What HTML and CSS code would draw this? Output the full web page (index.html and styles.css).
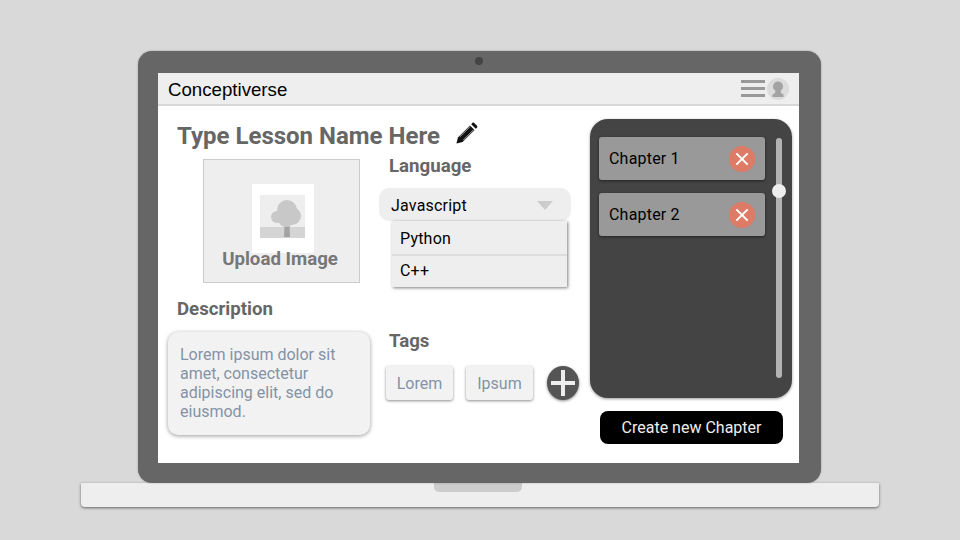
FILE: index.html
```html
<!DOCTYPE html>
<html lang="en">
<head>
    <meta charset="UTF-8">
    <title>Conceptiverse</title>
    <link rel="stylesheet" href="styles.css">
</head>
<body>
    <div class="laptop">
        <div class="lid">
            <div class="camera"></div>
            <div class="screen">
                <div class="topbar">
                    <span class="brand">Conceptiverse</span>
                    <div class="topbar-right">
                        <div class="menu"><span></span><span></span><span></span></div>
                        <svg class="avatar" width="22" height="22" viewBox="0 0 22 22">
                            <circle cx="11" cy="11" r="11" fill="#dcdcdc"/>
                            <circle cx="11" cy="8.500" r="5" fill="#a3a3a3"/>
                            <path d="M8.500 12h5l.5 3 2.500 1.500v2.500h-11v-2.500l2.500-1.500z" fill="#a3a3a3"/>
                        </svg>
                    </div>
                </div>
                <div class="main">
                    <div class="editor">
                        <div class="title-row">
                            <h1>Type Lesson Name Here</h1>
                            <svg class="pencil" width="23" height="23" viewBox="0 0 24 24">
                                <path d="M1.500 22.500l1.600-6.400L15.600 3.600l4.800 4.800L7.900 20.900z" fill="#111"/>
                                <path d="M16.900 2.300l1.200-1.200c.6-.6 1.400-.6 2 0l2.800 2.800c.6.6.6 1.400 0 2l-1.200 1.200z" fill="#111"/>
                                <path d="M5 15.500L16 4.500M8.500 19L19.500 8" stroke="#fff" stroke-width=".7" fill="none"/>
                            </svg>
                        </div>
                        <div class="columns">
                            <div class="col-left">
                                <div class="upload">
                                    <div class="placeholder">
                                        <svg width="45" height="43" viewBox="0 0 45 43">
                                            <rect width="45" height="43" fill="#eeeeee"/>
                                            <rect y="32" width="45" height="11" fill="#d4d4d4"/>
                                            <path d="M30 42h-6l.5-12h5z" fill="#a3a3a3"/>
                                            <circle cx="27" cy="15" r="10" fill="#c8c8c8"/>
                                            <circle cx="32" cy="21" r="9" fill="#c8c8c8"/>
                                            <circle cx="26" cy="24" r="8" fill="#c8c8c8"/>
                                            <circle cx="17" cy="22" r="6" fill="#c8c8c8"/>
                                        </svg>
                                    </div>
                                    <span class="upload-label">Upload Image</span>
                                </div>
                                <h2 class="desc-heading">Description</h2>
                                <div class="desc-card">Lorem ipsum dolor sit amet, consectetur adipiscing elit, sed do eiusmod.</div>
                            </div>
                            <div class="col-right">
                                <h2 class="lang-heading">Language</h2>
                                <div class="select">
                                    <span>Javascript</span>
                                    <div class="arrow"></div>
                                </div>
                                <div class="dropdown">
                                    <div class="option">Python</div>
                                    <div class="option">C++</div>
                                </div>
                                <h2 class="tags-heading">Tags</h2>
                                <div class="tags">
                                    <div class="tag">Lorem</div>
                                    <div class="tag">Ipsum</div>
                                    <div class="add-tag"></div>
                                </div>
                            </div>
                        </div>
                    </div>
                    <div class="sidebar">
                        <div class="panel">
                            <div class="chapters">
                                <div class="chapter">
                                    <span>Chapter 1</span>
                                    <div class="remove"></div>
                                </div>
                                <div class="chapter">
                                    <span>Chapter 2</span>
                                    <div class="remove"></div>
                                </div>
                            </div>
                            <div class="track"><div class="knob"></div></div>
                        </div>
                        <button class="create">Create new Chapter</button>
                    </div>
                </div>
            </div>
        </div>
        <div class="base"><div class="notch"></div></div>
    </div>
</body>
</html>
```
FILE: styles.css
```css
* { box-sizing: border-box; }
body { margin: 0; width: 960px; height: 540px; overflow: hidden; background-color: #d9d9d9; font-family: Roboto, sans-serif; }
h1, h2 { margin: 0; font-weight: 700; color: #666; }

.laptop { display: flex; flex-direction: column; align-items: center; padding-top: 51px; }
.lid { position: relative; width: 683px; height: 432px; margin-right: 1px; padding: 22px 22px 20px 20px; background-color: #666; border-radius: 14px; box-shadow: 0 0 2px rgba(0,0,0,.3); }
.camera { position: absolute; top: 6px; left: 337px; width: 8px; height: 8px; border-radius: 50%; background-color: #444; }
.screen { height: 390px; background-color: #fff; }
.base { width: 798px; height: 24px; display: flex; justify-content: center; background-color: #eee; border-radius: 0 0 4px 4px; box-shadow: 0 1px 3px rgba(0,0,0,.55); }
.notch { width: 88px; height: 9px; margin-right: 5px; background-color: #ccc; border-radius: 0 0 5px 5px; }

.topbar { display: flex; align-items: center; justify-content: space-between; height: 33px; padding: 0 10px 0 10px; background-color: #eee; border-bottom: 2px solid #d8d8d8; }
.brand { padding-top: 2px; font-family: "Liberation Sans", sans-serif; font-size: 18.67px; line-height: 22px; color: #000; }
.topbar-right { display: flex; align-items: center; gap: 2px; }
.menu { display: flex; flex-direction: column; gap: 4px; width: 24px; }
.menu span { height: 3px; background-color: #999; }

.main { display: flex; padding: 13px 0 0 10px; }
.editor { width: 411px; padding-top: 3px; }
.title-row { display: flex; align-items: center; gap: 15px; height: 28px; margin: 0 0 5px 9px; }
.pencil { margin-top: -5px; }
h1 { font-size: 24px; line-height: 28px; }
.columns { display: flex; gap: 9px; }
.col-left { width: 202px; }
.col-right { width: 200px; }

.upload { display: flex; flex-direction: column; align-items: center; width: 157px; height: 124px; margin: 4px 0 0 35px; background-color: #eee; border: 1px solid #ccc; }
.placeholder { width: 62px; height: 69px; margin: 24px 0 0 2px; padding: 11px 0 0 8px; background-color: #fff; }
.placeholder svg { display: block; }
.upload-label { position: relative; margin: -4px 3px 0 0; font-size: 18.67px; font-weight: 700; line-height: 21px; color: #777; }

h2 { font-size: 18.67px; line-height: 22px; }
.desc-heading { margin: 15px 0 12px 9px; }
.desc-card { height: 103px; padding: 13px 12px; background-color: #f2f2f2; border-radius: 10px; font-size: 16px; line-height: 19px; color: #8492a6; box-shadow: 0 1px 4px rgba(0,0,0,.4); }

.lang-heading { margin: 0 0 11px 10px; }
.select { display: flex; align-items: center; justify-content: space-between; width: 192px; height: 33px; padding: 1px 18px 0 12px; background-color: #eee; border-radius: 10px; font-size: 16px; color: #000; letter-spacing: .2px; }
.arrow { width: 0; height: 0; border-left: 8px solid transparent; border-right: 8px solid transparent; border-top: 9px solid #ccc; }
.dropdown { width: 175px; margin-left: 13px; box-shadow: 1px 1px 3px rgba(0,0,0,.5); }
.option { height: 33px; padding-left: 8px; line-height: 36px; background-color: #eee; font-size: 16px; color: #000; letter-spacing: .2px; }
.option + .option { border-top: 2px solid #ddd; line-height: 30px; }
.tags-heading { margin: 43px 0 14px 10px; }
.tags { display: flex; align-items: center; gap: 13px; padding-left: 7px; }
.tag { width: 67px; height: 34px; padding-top: 1px; line-height: 34px; text-align: center; background-color: #f2f2f2; border-radius: 3px; font-size: 16px; color: #8492a6; box-shadow: 0 1px 3px rgba(0,0,0,.45); }
.tag + .tag { margin-right: 1px; }
.add-tag { position: relative; width: 32px; height: 34px; border-radius: 50%; background-color: #555; box-shadow: 0 1px 3px rgba(0,0,0,.45); }
.add-tag::before, .add-tag::after { content: ""; position: absolute; background-color: #eee; }
.add-tag::before { left: 4px; right: 4px; top: 15px; height: 4px; }
.add-tag::after { top: 4px; bottom: 4px; left: 14px; width: 4px; }

.sidebar { display: flex; flex-direction: column; width: 202px; margin-left: 11px; }
.panel { display: flex; gap: 11px; height: 279px; padding: 18px 9px 0; background-color: #444; border-radius: 18px; box-shadow: 0 1px 3px rgba(0,0,0,.4); }
.chapters { display: flex; flex-direction: column; gap: 13px; width: 166px; }
.chapter { display: flex; align-items: center; justify-content: space-between; height: 43px; padding: 0 10px; background-color: #999; border-radius: 3px; font-size: 16px; color: #000; letter-spacing: .2px; box-shadow: 0 1px 3px rgba(0,0,0,.5); }
.remove { position: relative; width: 26px; height: 26px; border-radius: 50%; background-color: #dd7b66; }
.remove::before, .remove::after { content: ""; position: absolute; left: 5px; right: 5px; top: 12px; height: 2px; background-color: #fff; transform: rotate(45deg); }
.remove::after { transform: rotate(-45deg); }
.track { position: relative; width: 6px; height: 240px; margin-top: 1px; background-color: #b3b3b3; border-radius: 3px; }
.knob { position: absolute; left: -4px; top: 46px; width: 14px; height: 14px; border-radius: 50%; background-color: #eee; }
.create { width: 183px; height: 33px; margin: 13px 0 0 10px; padding: 0; border: none; border-radius: 8px; background-color: #000; color: #eee; font-family: Roboto, sans-serif; font-size: 16px; }
```
